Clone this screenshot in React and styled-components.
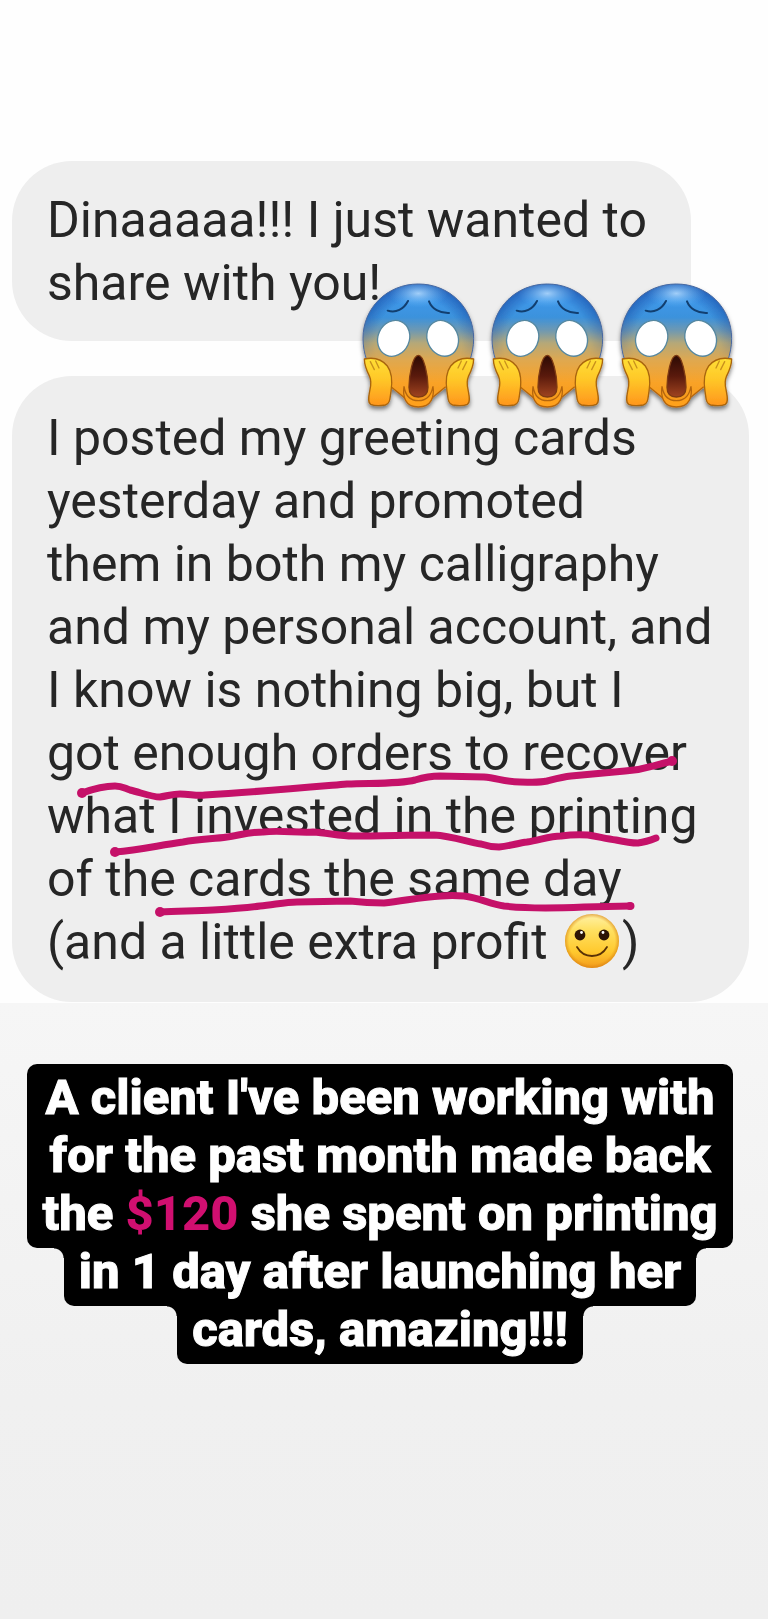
import React from 'react'
import styled, { createGlobalStyle } from 'styled-components'

const GlobalStyle = createGlobalStyle`
  * {
    box-sizing: border-box;
  }
  body {
    margin: 0;
    background: #efefef;
    font-family: Roboto, "Liberation Sans", sans-serif;
  }
`

const Story = styled.main`
  display: flex;
  flex-direction: column;
  min-height: 100vh;
  background: linear-gradient(#f6f6f6 1003px, #f0f0f0 1400px, #efefef);
`

const Chat = styled.section`
  display: flex;
  flex-direction: column;
  align-items: flex-start;
  gap: 35px;
  padding: 161px 19px 1px 12px;
  background: #fefefe;
`

const Bubble = styled.article`
  position: relative;
  width: ${p => (p.$wide ? '100%' : 'auto')};
  padding: ${p => (p.$wide ? '31px 34px 28px 35px' : '28px 44px 26px 35px')};
  border-radius: 60px;
  background: #eeeeee;
  color: #262626;
`

const Message = styled.p`
  margin: 0;
  font-size: 50px;
  line-height: 63px;
  white-space: nowrap;
`

const Line = styled.span`
  display: block;
`

const Stickers = styled.div`
  position: absolute;
  top: -94px;
  left: 348px;
  display: flex;
  gap: 12px;
`

const Marker = styled.svg`
  position: absolute;
  top: 0;
  left: 0;
  overflow: visible;
  fill: none;
  stroke: #c51169;
  stroke-width: 7;
  stroke-linecap: round;
  stroke-linejoin: round;

  circle {
    fill: #c51169;
    stroke: none;
  }
`

const InlineFace = styled.svg`
  margin: 0 2px 0 4px;
  vertical-align: -10px;
`

const Caption = styled.section`
  display: flex;
  flex-direction: column;
  align-items: center;
  padding: 61px 37px 0 29px;
  color: #fff;
  font-size: 49px;
  font-weight: 800;
  line-height: 58px;
  text-align: center;
  white-space: nowrap;
  -webkit-text-stroke: 1px #fff;
`

const CaptionRow = styled.div`
  display: flex;
  align-items: flex-start;
`

const CaptionBox = styled.div`
  padding: ${p => (p.$first ? '5px 15px' : '0 15px 5px')};
  margin-top: ${p => (p.$first ? '0' : '-5px')};
  border-radius: ${p => (p.$first ? '10px' : '0 0 10px 10px')};
  background: #000;
`

// concave corner where a narrow box hangs under a wider one
const Corner = styled.i`
  width: 10px;
  height: 10px;
  background: radial-gradient(circle at ${p => p.$at} 100%, transparent 9px, #000 10px);
`

const Price = styled.strong`
  color: #d10f70;
  font-weight: inherit;
  -webkit-text-stroke: 0;
`

function Scream () {
  return (
    <svg width="117" height="132" viewBox="15 21 351 396" overflow="visible" role="img" aria-label="Face screaming in fear">
      <defs>
        <linearGradient id="skin" x1="0" y1="0" x2="0" y2="1">
          <stop offset="0" stopColor="#4a93e0" />
          <stop offset="0.12" stopColor="#3f98ea" />
          <stop offset="0.27" stopColor="#3b92dc" />
          <stop offset="0.38" stopColor="#7099b0" />
          <stop offset="0.48" stopColor="#b5a878" />
          <stop offset="0.62" stopColor="#dfa850" />
          <stop offset="0.8" stopColor="#f9a328" />
          <stop offset="1" stopColor="#f59515" />
        </linearGradient>
        <radialGradient id="shine" cx="0.5" cy="0.35" r="0.5">
          <stop offset="0" stopColor="#b5dcff" stopOpacity="0.85" />
          <stop offset="1" stopColor="#5cb0f5" stopOpacity="0" />
        </radialGradient>
        <radialGradient id="rim" gradientUnits="userSpaceOnUse" cx="190" cy="205" r="182">
          <stop offset="0.72" stopColor="#1b4fa8" stopOpacity="0" />
          <stop offset="1" stopColor="#1b4fa8" stopOpacity="0.75" />
        </radialGradient>
        <linearGradient id="fade" x1="0" y1="0" x2="0" y2="1">
          <stop offset="0.3" stopColor="#fff" />
          <stop offset="1" stopColor="#000" />
        </linearGradient>
        <mask id="rimMask" maskUnits="userSpaceOnUse" x="15" y="21" width="351" height="250">
          <rect x="15" y="21" width="351" height="250" fill="url(#fade)" />
        </mask>
        <linearGradient id="mouth" x1="0" y1="0" x2="0" y2="1">
          <stop offset="0" stopColor="#2c0a04" />
          <stop offset="0.5" stopColor="#5a1a0c" />
          <stop offset="1" stopColor="#a04420" />
        </linearGradient>
        <linearGradient id="hand" x1="0" y1="0" x2="0" y2="1">
          <stop offset="0" stopColor="#ffdf35" />
          <stop offset="0.45" stopColor="#ffc728" />
          <stop offset="1" stopColor="#ff961c" />
        </linearGradient>
        <filter id="drop" x="-15%" y="-10%" width="130%" height="130%">
          <feDropShadow dx="0" dy="9" stdDeviation="6" floodColor="#000" floodOpacity="0.5" />
        </filter>
      </defs>
      <g filter="url(#drop)">
        <path d="M190 27C97 27 24 98 24 190c0 62 28 112 80 146 18 12 36 23 46 34 12 16 22 26 40 26s30-10 40-26c10-11 28-22 46-34 52-34 80-84 80-146C356 98 283 27 190 27z" fill="url(#skin)" />
        <path d="M190 27C97 27 24 98 24 190c0 29 6 56 18 80h296c12-24 18-51 18-80C356 98 283 27 190 27z" fill="url(#rim)" mask="url(#rimMask)" />
        <ellipse cx="190" cy="68" rx="90" ry="42" fill="url(#shine)" />
        <path d="M35 255c-7-20-11-42-11-65C24 98 97 27 190 27s166 71 166 163c0 25-5 46-11 65" fill="none" stroke="#4868a0" strokeWidth="3" />
        <path d="M108 335l44 36M272 335l-44 36" fill="none" stroke="#b5660e" strokeWidth="4" />
        <path d="M147 334c-4 30 2 62 43 62s48-32 44-62c-4 20-12 43-44 43s-40-23-43-43z" fill="#ffa11d" stroke="#b5660e" strokeWidth="4" />
        <g fill="url(#hand)" stroke="#a9650f" strokeWidth="4" strokeLinejoin="round">
          <path d="M28 252c28-6 52 0 69 21 14 19 15 50 11 76-3 17-2 38-17 41-13 2-33 3-44-2-11-7-5-27-2-45 3-14 5-25-1-38-9-18-16-33-16-53z" />
          <path d="M356 252c-28-6-52 0-69 21-14 19-15 50-11 76 3 17 2 38 17 41 13 2 33 3 44-2 11-7 5-27 2-45-3-14-5-25 1-38 9-18 16-33 16-53z" />
        </g>
      </g>
      <path d="M98 107c25 8 48-4 61-29M222 79c9 23 32 36 60 35" fill="none" stroke="#123f70" strokeWidth="6" strokeLinecap="round" />
      <ellipse cx="116" cy="190" rx="47" ry="55" transform="rotate(24 116 190)" fill="#fff" stroke="#5587a0" strokeWidth="4" />
      <ellipse cx="263" cy="190" rx="46" ry="55" transform="rotate(-24 263 190)" fill="#fff" stroke="#5587a0" strokeWidth="4" />
      <path d="M190 241c-17 0-28 60-28 96 0 20 11 29 28 29s29-9 29-29c0-36-12-96-29-96z" fill="url(#mouth)" stroke="#7e3b12" strokeWidth="4" />
      <path d="M46 260l12 24M62 258l10 21M335 260l-12 24M319 258l-10 21" fill="none" stroke="#c9911d" strokeWidth="4" strokeLinecap="round" />
    </svg>
  )
}

function Smile () {
  return (
    <InlineFace width="56" height="56" viewBox="0 0 56 56" role="img" aria-label="Slightly smiling face">
      <defs>
        <linearGradient id="smileSkin" x1="0" y1="0" x2="0" y2="1">
          <stop offset="0" stopColor="#fff2a8" />
          <stop offset="0.3" stopColor="#ffe060" />
          <stop offset="0.7" stopColor="#ffc92e" />
          <stop offset="1" stopColor="#f39a1c" />
        </linearGradient>
        <radialGradient id="smileRim">
          <stop offset="0.85" stopColor="#e08a10" stopOpacity="0" />
          <stop offset="1" stopColor="#d27a10" stopOpacity="0.6" />
        </radialGradient>
      </defs>
      <circle cx="28" cy="28" r="27" fill="url(#smileSkin)" />
      <circle cx="28" cy="28" r="27" fill="url(#smileRim)" />
      <circle cx="16" cy="22" r="5.4" fill="#2d1405" />
      <circle cx="40" cy="22" r="5.4" fill="#2d1405" />
      <circle cx="17.5" cy="19.5" r="1.4" fill="#fff" />
      <circle cx="39" cy="19.5" r="1.4" fill="#fff" />
      <path d="M13 34c7 12 23 12 30 0" fill="none" stroke="#5a3206" strokeWidth="1.8" strokeLinecap="round" />
    </InlineFace>
  )
}

function Underlines () {
  return (
    <Marker width="737" height="626" viewBox="12 376 737 626" aria-hidden="true">
      <circle cx="82" cy="793" r="5" />
      <path d="M82 793C93 789 105 786 115 786C122 786 124 788 130 790C142 793 152 797 160 797C168 796 172 794 180 794C190 794 196 796 205 795C255 792 300 788 347 784C375 783 400 784 415 780C425 777 430 776 440 776L484 777C497 778 505 782 520 782C530 782 538 783 547 781C555 779 562 777 571 776L625 771C650 769 652 765 673 761" />
      <circle cx="672" cy="761" r="5" />
      <circle cx="115" cy="852" r="5" />
      <path d="M115 852C140 850 160 845 183 842C200 839 213 839 227 837C240 835 250 832 263 832C280 830 297 833 313 832C328 833 340 836 353 836C380 836 410 835 434 835C452 836 468 842 481 844Q490 847 499 847C510 846 518 843 527 842C540 840 550 836 561 836Q575 834 588 835C600 837 607 839 616 840C625 842 632 843 638 843Q646 842 656 838" />
      <circle cx="160" cy="912" r="5" />
      <path d="M160 912C178 911 195 911 213 910C230 909 245 908 260 906C273 905 285 902 297 902L350 901Q367 903 384 903C404 901 421 897 441 896Q452 895 464 896C480 898 490 904 504 906C530 909 560 908 584 907L631 906" />
      <circle cx="630" cy="906" r="4" />
    </Marker>
  )
}

export default function App () {
  return (
    <>
      <GlobalStyle />
      <Story>
        <Chat>
          <Bubble>
            <Message>
              <Line>Dinaaaaa!!! I just wanted to</Line>
              <Line>share with you!</Line>
            </Message>
          </Bubble>
          <Bubble $wide>
            <Message>
              <Line>I posted my greeting cards</Line>
              <Line>yesterday and promoted</Line>
              <Line>them in both my calligraphy</Line>
              <Line>and my personal account, and</Line>
              <Line>I know is nothing big, but I</Line>
              <Line>got enough orders to recover</Line>
              <Line>what I invested in the printing</Line>
              <Line>of the cards the same day</Line>
              <Line>(and a little extra profit <Smile />)</Line>
            </Message>
            <Underlines />
            <Stickers>
              <Scream />
              <Scream />
              <Scream />
            </Stickers>
          </Bubble>
        </Chat>
        <Caption>
          <CaptionBox $first>
            <Line>A client I've been working with</Line>
            <Line>for the past month made back</Line>
            <Line>the <Price>$120</Price> she spent on printing</Line>
          </CaptionBox>
          <CaptionRow>
            <Corner $at="0" />
            <CaptionBox>in 1 day after launching her</CaptionBox>
            <Corner $at="100%" />
          </CaptionRow>
          <CaptionRow>
            <Corner $at="0" />
            <CaptionBox>cards, amazing!!!</CaptionBox>
            <Corner $at="100%" />
          </CaptionRow>
        </Caption>
      </Story>
    </>
  )
}
